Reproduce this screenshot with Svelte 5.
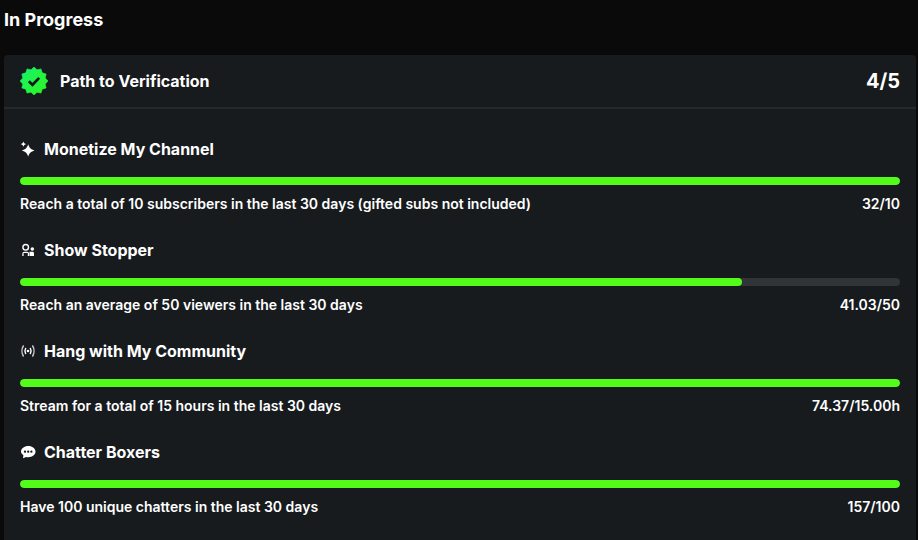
<script>
  const items = [
    { icon: 'spark', title: 'Monetize My Channel', desc: 'Reach a total of 10 subscribers in the last 30 days (gifted subs not included)', value: '32/10', pct: 100 },
    { icon: 'user', title: 'Show Stopper', desc: 'Reach an average of 50 viewers in the last 30 days', value: '41.03/50', pct: 82.06 },
    { icon: 'live', title: 'Hang with My Community', desc: 'Stream for a total of 15 hours in the last 30 days', value: '74.37/15.00h', pct: 100 },
    { icon: 'chat', title: 'Chatter Boxers', desc: 'Have 100 unique chatters in the last 30 days', value: '157/100', pct: 100 }
  ];

  const scallops = 12;
  const badgePath = (() => {
    let d = '';
    for (let i = 0; i < scallops * 2; i++) {
      const r = i % 2 === 0 ? 14 : 11.6;
      const a = (Math.PI * i) / scallops - Math.PI / 2;
      const x = (14 + r * Math.cos(a)).toFixed(2);
      const y = (14 + r * Math.sin(a)).toFixed(2);
      d += (i === 0 ? 'M' : 'L') + x + ' ' + y;
    }
    return d + 'z';
  })();
</script>

<main class="page">
  <h2 class="heading">In Progress</h2>
  <section class="card">
    <header class="card-head">
      <div class="card-title">
        <svg class="badge" viewBox="0 0 28 28" width="28" height="28">
          <defs>
            <linearGradient id="g" x1="0" y1="0" x2="1" y2="1">
              <stop offset="0" stop-color="#14f06e" />
              <stop offset="1" stop-color="#30f81c" />
            </linearGradient>
          </defs>
          <path fill="url(#g)" stroke="url(#g)" stroke-width="0.6" stroke-linejoin="round" d={badgePath} />
          <path d="M8.800 14.200l3.700 3.600 6.700-6.900" fill="none" stroke="#141a1e" stroke-width="2.700" />
        </svg>
        <span>Path to Verification</span>
      </div>
      <span class="count">4/5</span>
    </header>
    <div class="list">
      {#each items as item}
        <article class="item">
          <div class="item-title">
            <svg class="icon" viewBox="0 0 16 16" width="16" height="16" fill="#fff">
              {#if item.icon === 'spark'}
                <path d="M8.200 3.200C9.300 6.900 10.700 8.200 14.600 9.400 10.700 10.600 9.300 11.900 8.200 15.600 7.100 11.900 5.700 10.600 1.800 9.400 5.700 8.200 7.100 6.900 8.200 3.200z" />
                <path d="M3.400.400C3.900 2 4.500 2.600 6.200 3.100 4.500 3.600 3.900 4.200 3.400 5.800 2.900 4.200 2.300 3.600.600 3.100 2.300 2.600 2.900 2 3.400.400z" />
              {:else if item.icon === 'user'}
                <circle cx="5.700" cy="5.300" r="2.800" fill="none" stroke="#fff" stroke-width="1.400" />
                <circle cx="12.300" cy="7" r="1.800" />
                <path d="M2.300 14v-2.300c0-1.100.900-2 2-2h2.800c1.100 0 2 .900 2 2V14z" />
                <path d="M3.600 11h4.200v3H3.600z" fill="#171b1e" />
                <path d="M9.500 9.700H12.500c.900 0 1.500.700 1.500 1.600V14H9.500z" />
              {:else if item.icon === 'live'}
                <g fill="none" stroke="#fff" stroke-width="1.500" stroke-linecap="round">
                  <path d="M3.300 3C1.600 5.800 1.600 10.200 3.300 13" stroke-opacity="0.75" />
                  <path d="M12.700 3c1.700 2.800 1.700 7.200 0 10" stroke-opacity="0.75" />
                  <path d="M5.600 5.500c-.800 1.500-.800 3.500 0 5" />
                  <path d="M10.400 5.500c.800 1.500.800 3.500 0 5" />
                </g>
                <circle cx="8" cy="8" r="1.300" />
              {:else}
                <path d="M8.300 2c4 0 7.200 2.500 7.200 5.600s-3.200 5.600-7.200 5.600c-.800 0-1.500-.100-2.200-.300L3 14.200l.400-3C1.900 10.200 1 9 1 7.600 1 4.500 4.300 2 8.300 2z" />
                <circle cx="5" cy="7.700" r="1.150" fill="#171b1e" />
                <circle cx="8.200" cy="7.700" r="1.150" fill="#171b1e" />
                <circle cx="11.400" cy="7.700" r="1.150" fill="#171b1e" />
              {/if}
            </svg>
            <span>{item.title}</span>
          </div>
          <div class="track"><div class="fill" style="width: {item.pct}%"></div></div>
          <div class="meta">
            <span>{item.desc}</span>
            <span>{item.value}</span>
          </div>
        </article>
      {/each}
    </div>
  </section>
</main>

<style>
  :global(body) {
    margin: 0;
    background: #0a0a0a;
  }
  .page {
    width: 918px;
    height: 540px;
    overflow: hidden;
    box-sizing: border-box;
    padding: 0 2px 0 4px;
    font-family: Inter, "Noto Sans", sans-serif;
    color: #fff;
    background: #0a0a0a;
  }
  .heading {
    margin: 0;
    height: 55px;
    box-sizing: border-box;
    padding-top: 9px;
    font-size: 18px;
    line-height: 22px;
    font-weight: 700;
  }
  .card {
    background: #171b1e;
    border-radius: 4px 4px 0 0;
    height: 485px;
  }
  .card-head {
    height: 52px;
    padding: 0 16px;
    display: flex;
    align-items: center;
    justify-content: space-between;
    border-bottom: 2px solid #26292c;
  }
  .card-title {
    display: flex;
    align-items: center;
    gap: 12px;
    font-size: 16px;
    font-weight: 700;
  }
  .badge {
    flex: none;
  }
  .count {
    font-size: 20px;
    font-weight: 700;
  }
  .list {
    padding: 28px 16px 0;
    display: flex;
    flex-direction: column;
    gap: 27px;
  }
  .item {
    height: 74px;
  }
  .item-title {
    display: flex;
    align-items: center;
    gap: 8px;
    height: 24px;
    font-size: 16px;
    font-weight: 700;
  }
  .icon {
    flex: none;
  }
  .track {
    margin-top: 16px;
    height: 8px;
    border-radius: 4px;
    background: #303337;
    overflow: hidden;
  }
  .fill {
    height: 100%;
    border-radius: 4px;
    background: #53fc18;
  }
  .meta {
    margin-top: 9px;
    display: flex;
    justify-content: space-between;
    font-size: 14px;
    line-height: 20px;
    font-weight: 600;
    color: #fff;
  }
</style>
